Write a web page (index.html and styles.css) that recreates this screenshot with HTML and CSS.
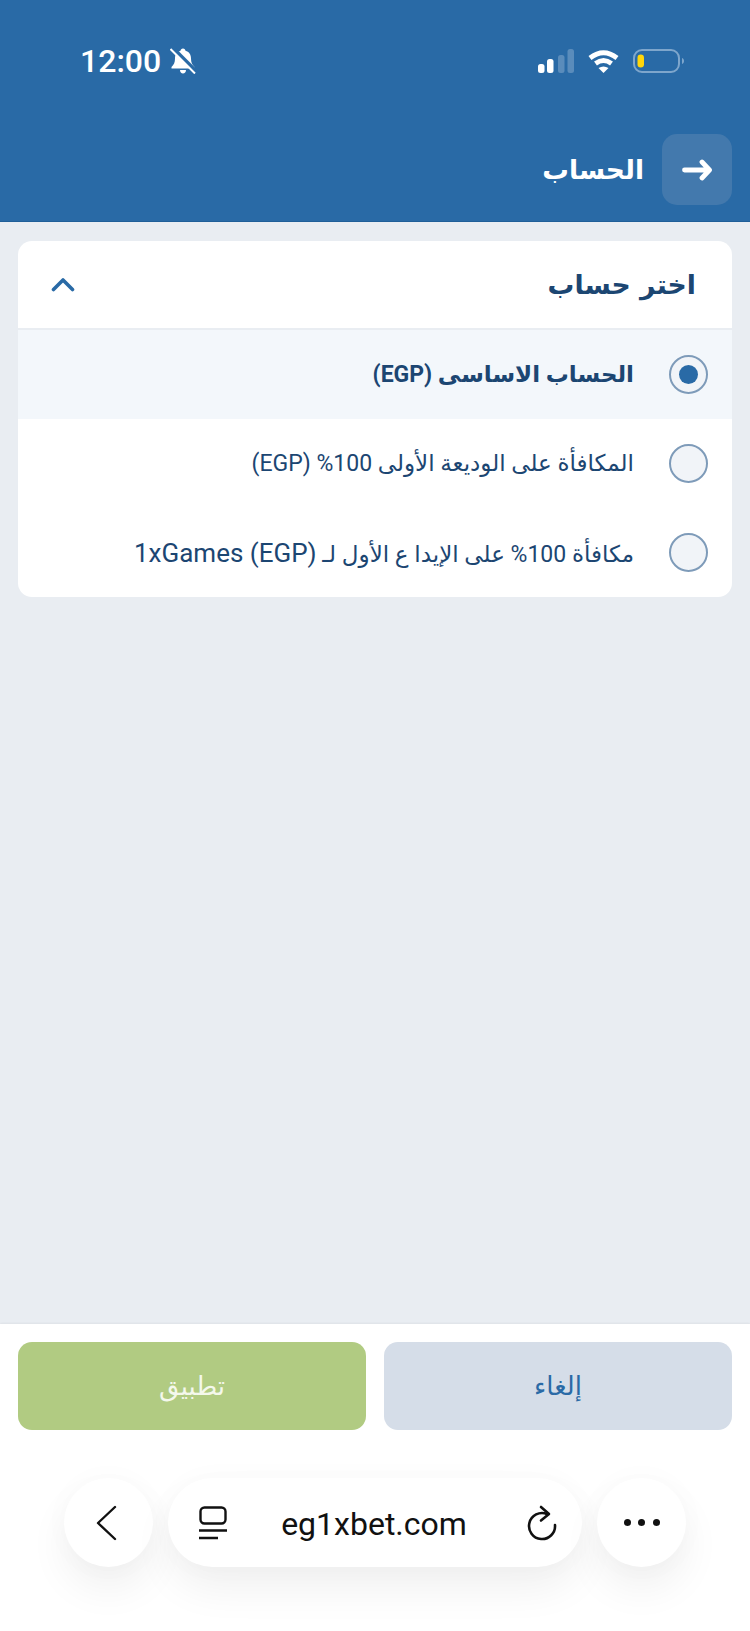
FILE: index.html
```html
<!DOCTYPE html>
<html lang="ar" dir="rtl">
<head>
    <meta charset="UTF-8">
    <title>الحساب</title>
    <link rel="stylesheet" href="styles.css">
</head>
<body>

<header class="top">
    <div class="status" dir="ltr">
        <div class="status-left">
            <span class="time">12:00</span>
            <svg class="bell" width="26" height="26" viewBox="0 0 26 26">
                <path d="M13 0.500c1.500 0 2.400 1 2.500 2.300 3.500 1 5.500 3.900 5.500 7.700 0 4 1.200 6.200 3.500 8.500v1.500H1.500V19c2.300-2.300 3.500-4.500 3.500-8.500 0-3.800 2-6.700 5.500-7.700C10.600 1.500 11.500 0.500 13 0.500zM10 22h6c0 2-1.300 3.500-3 3.500s-3-1.500-3-3.500z" fill="#fff"/>
                <path d="M2.500 -0.500 26 23" stroke="#296aa6" stroke-width="3.600"/>
                <path d="M0.500 1 25 25.500" stroke="#fff" stroke-width="2"/>
            </svg>
        </div>
        <div class="status-right">
            <svg width="36" height="24" viewBox="0 0 36 24">
                <rect x="0" y="15" width="6.500" height="9" rx="2.500" fill="#fff"/>
                <rect x="9" y="10" width="6.500" height="14" rx="2.500" fill="#fff"/>
                <rect x="20" y="6" width="6.500" height="18" rx="2.500" fill="#5a8cbb"/>
                <rect x="29.500" y="0" width="6.500" height="24" rx="2.500" fill="#5a8cbb"/>
            </svg>
            <svg width="31" height="24" viewBox="0 0 31 24">
                <path d="M2 9Q15.500 -1.500 29 9" fill="none" stroke="#fff" stroke-width="4.800"/>
                <path d="M7.500 14.500Q15.500 8.500 23.500 14.500" fill="none" stroke="#fff" stroke-width="4.800"/>
                <path d="M10.500 19Q15.500 16 20.500 19L15.500 24z" fill="#fff"/>
            </svg>
            <svg width="51" height="24" viewBox="0 0 51 24">
                <rect x="1" y="1" width="45" height="22" rx="8" fill="none" stroke="#7ea6cc" stroke-width="2"/>
                <rect x="4.500" y="5.500" width="6.500" height="13" rx="3.200" fill="#ffd60a"/>
                <path d="M49 9c1.500 0.500 2 1.800 2 3s-0.500 2.500-2 3z" fill="#7ea6cc"/>
            </svg>
        </div>
    </div>
    <div class="nav">
        <button class="back-btn" type="button">
            <svg width="30" height="22" viewBox="0 0 30 22">
                <path d="M2.500 11H27M20 3 27.500 11 20 19" fill="none" stroke="#fff" stroke-width="4.800" stroke-linejoin="round" stroke-linecap="round"/>
            </svg>
        </button>
        <h1 class="nav-title">الحساب</h1>
    </div>
</header>

<main class="content">
    <section class="card">
        <div class="card-head">
            <h2 class="card-title">اختر حساب</h2>
            <svg width="24" height="15" viewBox="0 0 24 15">
                <path d="M2.500 12.500 12 3 21.500 12.500" fill="none" stroke="#296aa6" stroke-width="3.600" stroke-linecap="round" stroke-linejoin="round"/>
            </svg>
        </div>
        <div class="option selected">
            <span class="radio"><span class="radio-dot"></span></span>
            <span class="option-text">الحساب الاساسى (EGP)</span>
        </div>
        <div class="option">
            <span class="radio"></span>
            <span class="option-text">المكافأة على الوديعة الأولى 100% (EGP)</span>
        </div>
        <div class="option">
            <span class="radio"></span>
            <span class="option-text">مكافأة 100% على الإيدا ع الأول لـ <span class="option-latin">(EGP) 1xGames</span></span>
        </div>
    </section>
</main>

<footer class="bottom">
    <div class="actions">
        <button class="btn btn-cancel" type="button">إلغاء</button>
        <button class="btn btn-apply" type="button">تطبيق</button>
    </div>
    <div class="browser" dir="ltr">
        <div class="round round-back">
            <svg width="22" height="36" viewBox="0 0 22 36">
                <path d="M20 2 3 18 20 34" fill="none" stroke="#111" stroke-width="2.400" stroke-linecap="round" stroke-linejoin="round"/>
            </svg>
        </div>
        <div class="url-pill">
            <svg width="30" height="34" viewBox="0 0 30 34">
                <rect x="2.500" y="1.500" width="25" height="16" rx="4" fill="none" stroke="#111" stroke-width="2.400"/>
                <path d="M1 24.500H29M1 32H20" stroke="#111" stroke-width="2.400"/>
            </svg>
            <span class="url">eg1xbet.com</span>
            <svg width="30" height="36" viewBox="0 0 30 36">
                <path d="M20 9A13 13 0 1 0 28 20" fill="none" stroke="#111" stroke-width="2.600" stroke-linecap="round"/>
                <path d="M14 2 22 9 14 15.500" fill="none" stroke="#111" stroke-width="2.600" stroke-linecap="round" stroke-linejoin="round"/>
            </svg>
        </div>
        <div class="round dots">
            <span></span><span></span><span></span>
        </div>
    </div>
</footer>

</body>
</html>
```

FILE: styles.css
```css
* {
    margin: 0;
    padding: 0;
    box-sizing: border-box;
}

body {
    font-family: 'DejaVu Sans', 'Noto Sans', sans-serif;
    background-color: #e9edf2;
    display: flex;
    flex-direction: column;
    height: 1631px;
    overflow: hidden;
}

button {
    border: none;
    font-family: inherit;
}

.top {
    background-color: #296aa6;
    height: 222px;
    padding: 0 18px;
    border-bottom: 1px solid #1f5f99;
}

.status {
    height: 134px;
    padding: 49px 48px 0 62px;
    display: flex;
    justify-content: space-between;
    align-items: flex-start;
}

.status-left {
    display: flex;
    align-items: center;
    gap: 9px;
    height: 24px;
}

.time {
    font-family: 'Roboto', sans-serif;
    font-size: 32px;
    font-weight: 500;
    color: #fff;
}

.status-right {
    display: flex;
    align-items: center;
    gap: 14px;
}

.nav {
    display: flex;
    align-items: center;
    gap: 18px;
}

.back-btn {
    width: 70px;
    height: 71px;
    border-radius: 15px;
    background-color: #4379ad;
    display: flex;
    align-items: center;
    justify-content: center;
}

.nav-title {
    font-size: 26.5px;
    font-weight: bold;
    color: #fff;
}

.content {
    flex: 1;
    padding: 19px 18px;
}

.card {
    background-color: #fff;
    border-radius: 14px;
    overflow: hidden;
}

.card-head {
    height: 89px;
    padding: 0 36px 0 33px;
    display: flex;
    align-items: center;
    justify-content: space-between;
    border-bottom: 2px solid #e9edf2;
}

.card-title {
    font-size: 26.7px;
    font-weight: bold;
    color: #1c4672;
}

.option {
    height: 89px;
    padding: 0 24px;
    display: flex;
    align-items: center;
    gap: 35px;
    font-family: 'Roboto', 'DejaVu Sans', sans-serif;
    font-size: 23px;
    color: #1c4672;
}

.option.selected {
    background-color: #f3f7fb;
    font-weight: bold;
}

.option-latin {
    font-size: 26px;
}

.radio {
    width: 39px;
    height: 39px;
    border-radius: 50%;
    border: 2px solid #7e9bb9;
    background-color: #f1f4f8;
    display: flex;
    align-items: center;
    justify-content: center;
    flex-shrink: 0;
}

.radio-dot {
    width: 19px;
    height: 19px;
    border-radius: 50%;
    background-color: #296aa6;
}

.bottom {
    background-color: #fff;
    height: 307px;
    padding: 18px 18px 0;
    box-shadow: 0 -1px 2px rgba(0, 0, 0, 0.05);
}

.actions {
    display: flex;
    gap: 18px;
}

.btn {
    flex: 1;
    height: 88px;
    border-radius: 14px;
    font-size: 26px;
}

.btn-cancel {
    background-color: #d5dde8;
    color: #2a6aa6;
}

.btn-apply {
    background-color: #b1cb82;
    color: #f4f8ec;
}

.browser {
    margin-top: 48px;
    padding: 0 46px;
    display: flex;
    gap: 15px;
}

.round, .url-pill {
    height: 89px;
    background-color: #fff;
    box-shadow: 0 22px 40px rgba(0, 0, 0, 0.06), 0 0 30px rgba(0, 0, 0, 0.025);
    display: flex;
    align-items: center;
}

.round {
    width: 89px;
    border-radius: 50%;
    justify-content: center;
}

.round-back {
    padding-right: 6px;
}

.url-pill {
    flex: 1;
    border-radius: 45px;
    padding: 0 25px 0 30px;
    justify-content: space-between;
}

.url {
    font-family: 'Roboto', sans-serif;
    font-size: 32px;
    color: #111;
    padding-top: 2px;
    margin-right: 7px;
}

.dots {
    gap: 7.5px;
}

.dots span {
    width: 7px;
    height: 7px;
    border-radius: 50%;
    background-color: #111;
}
```
